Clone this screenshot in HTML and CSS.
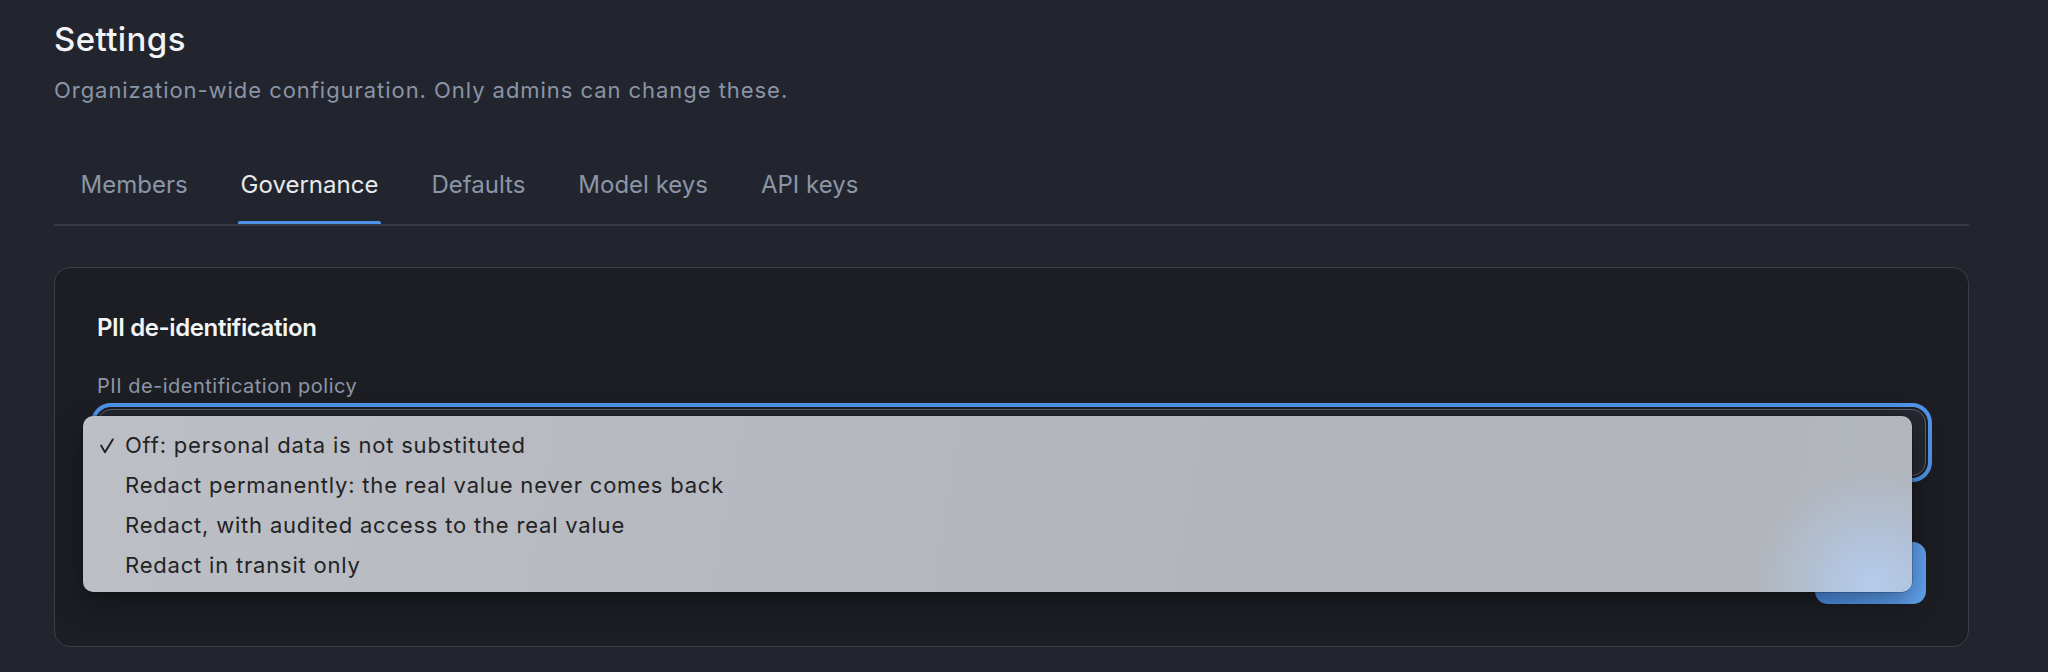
FILE: index.html
```html
<!DOCTYPE html>
<html lang="en">
<head>
<meta charset="utf-8">
<title>Settings</title>
<link rel="stylesheet" href="styles.css">
</head>
<body>
<main class="page">
  <header class="head">
    <h1 class="title">Settings</h1>
    <p class="subtitle">Organization-wide configuration. Only admins can change these.</p>
  </header>

  <nav class="tabs">
    <a class="tab">Members</a>
    <a class="tab tab-active">Governance</a>
    <a class="tab">Defaults</a>
    <a class="tab">Model keys</a>
    <a class="tab">API keys</a>
  </nav>

  <section class="card">
    <h2 class="card-title">PII de-identification</h2>
    <label class="field-label">PII de-identification policy</label>
    <div class="select-wrap">
      <div class="select"><span class="select-value">Off: personal data is not substituted</span></div>
      <ul class="menu">
        <li class="menu-item selected"><svg class="check" viewBox="0 0 14 16" width="14" height="16"><path d="M1.2 7.6 L5 14.2 L12.8 1.4" fill="none" stroke="#1f1f1f" stroke-width="1.9" stroke-linecap="round" stroke-linejoin="round"/></svg><span>Off: personal data is not substituted</span></li>
        <li class="menu-item"><span>Redact permanently: the real value never comes back</span></li>
        <li class="menu-item"><span>Redact, with audited access to the real value</span></li>
        <li class="menu-item"><span>Redact in transit only</span></li>
      </ul>
    </div>
    <div class="actions">
      <button class="btn">Save</button>
    </div>
  </section>
</main>
</body>
</html>
```
FILE: styles.css
```css
* { box-sizing: border-box; }
html, body { margin: 0; padding: 0; }
body {
  background: #22252d;
  font-family: Inter, "Noto Sans", "Liberation Sans", sans-serif;
  color: #e8eaee;
}
.page {
  padding: 19px 79px 0 54px;
}
.title {
  margin: 0;
  font-size: 33px;
  line-height: 40px;
  font-weight: 500;
  color: #f1f3f6;
  letter-spacing: 0.4px;
}
.subtitle {
  margin: 16px 0 0;
  font-size: 22px;
  line-height: 30px;
  color: #8a94a6;
  font-weight: 400;
  letter-spacing: 0.95px;
}
.tabs {
  display: flex;
  margin-top: 42px;
  border-bottom: 2px solid #363a44;
}
.tab {
  position: relative;
  padding: 22px 26.5px 23px;
  font-size: 24px;
  line-height: 32px;
  color: #8b95a7;
  cursor: pointer;
}
.tab-active {
  color: #e7e9ed;
}
.tab-active::after {
  content: "";
  position: absolute;
  left: 23.5px;
  right: 23.5px;
  bottom: 0;
  height: 3px;
  border-radius: 2px 2px 0 0;
  background: #4f94e6;
}
.card {
  margin-top: 41px;
  background: #1c1e24;
  border: 1px solid #3a3e49;
  border-radius: 16px;
  padding: 44px 42px 42px;
}
.card-title {
  margin: 0;
  font-size: 24px;
  line-height: 32px;
  font-weight: 600;
  color: #f3f4f6;
  letter-spacing: -0.4px;
}
.field-label {
  display: block;
  margin-top: 28px;
  font-size: 20px;
  line-height: 28px;
  color: #8c96a8;
  letter-spacing: 0.5px;
}
.select-wrap {
  position: relative;
  margin-top: 9px;
}
.select {
  height: 67px;
  border: 1px solid #5b616d;
  border-radius: 14px;
  background: #252830;
  outline: 4.5px solid #4f94e8;
  outline-offset: 2px;
  padding: 0 26px;
  font-size: 22px;
  line-height: 65px;
  color: #e6e8ec;
}
.select-value {
  visibility: hidden;
}
.menu {
  position: absolute;
  left: -14px;
  top: 7px;
  width: 1829px;
  height: 176px;
  margin: 0;
  padding: 9px 0 7px;
  list-style: none;
  border-radius: 10px;
  background:
    radial-gradient(circle at 1790px 170px, rgba(180, 204, 236, 1) 0, rgba(178, 199, 228, 0.75) 45px, rgba(178, 192, 212, 0) 115px),
    linear-gradient(100deg, #bcbfc5 0%, #b5b8be 40%, #b1b4ba 70%, #b2b6bd 100%);
  box-shadow: 0 0 0 0.5px rgba(0, 0, 0, 0.35), 0 10px 30px rgba(0, 0, 0, 0.4);
  z-index: 5;
}
.menu-item {
  position: relative;
  height: 40px;
  padding-left: 42px;
  font-size: 22px;
  line-height: 40px;
  color: #232325;
  white-space: nowrap;
  letter-spacing: 0.8px;
}
.check {
  position: absolute;
  left: 17px;
  top: 13px;
}
.actions {
  display: flex;
  justify-content: flex-end;
  margin-top: 66px;
}
.btn {
  width: 111px;
  height: 62px;
  border: 0;
  border-radius: 13px;
  background: linear-gradient(100deg, #4a8ae0 0%, #5a9dee 60%, #62a4f1 100%);
  color: #ffffff;
  font-family: inherit;
  font-size: 22px;
  font-weight: 600;
}
```
